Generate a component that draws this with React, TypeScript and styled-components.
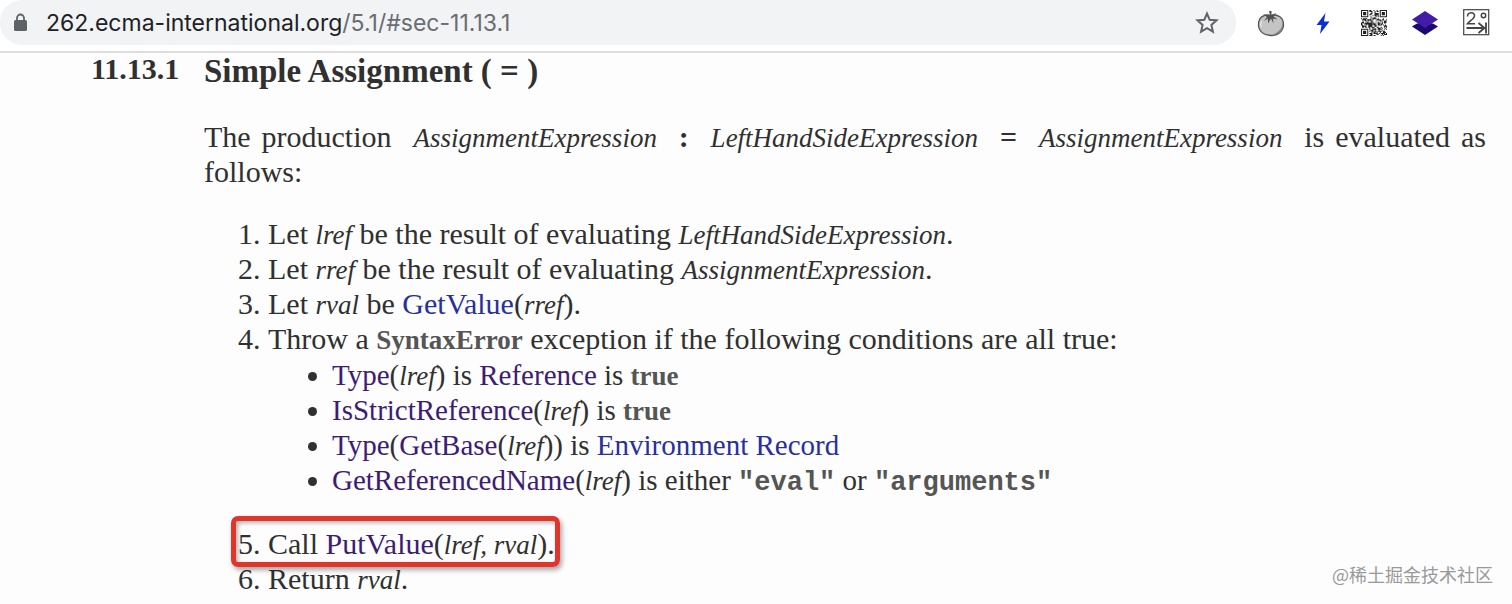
import React from "react";
import styled, { createGlobalStyle } from "styled-components";

const GlobalStyle = createGlobalStyle`
  *, *::before { box-sizing: border-box; }
  body {
    margin: 0;
    background: #fdfdfd;
    color: #303030;
    overflow: hidden;
  }
`;

const Page = styled.div`
  position: relative;
  min-height: 100vh;
`;

const Toolbar = styled.header`
  display: flex;
  align-items: flex-start;
  height: 53px;
  padding-right: 22px;
  background: #fff;
  border-bottom: 2px solid #dedede;
`;

const AddressBar = styled.div`
  display: flex;
  flex: 1;
  align-items: center;
  height: 45px;
  padding: 0 16px 0 12px;
  border-radius: 22px;
  background: #f1f3f4;
`;

const Address = styled.a`
  flex: 1;
  margin-left: 16px;
  color: #202124;
  font: 23px/28px Inter, "Liberation Sans", sans-serif;
  text-decoration: none;
`;

const AddressPath = styled.span`
  color: #6a6d71;
`;

const IconButton = styled.button`
  display: flex;
  padding: 0;
  border: 0;
  background: none;
`;

const Extensions = styled.nav`
  display: flex;
  align-items: center;
  gap: 24px;
  height: 45px;
  margin-left: 21px;
`;

const Article = styled.main`
  padding: 0 26px 0 91px;
  font-family: "Palatino", "Liberation Serif", serif;
  font-size: 30px;
  line-height: 35px;
`;

const Heading = styled.h1`
  display: flex;
  margin: 0;
  padding-top: 1px;
  font-size: 33px;
  line-height: 35px;
`;

const SectionNumber = styled.span`
  width: 113px;
  font-size: 30px;
  line-height: 30px;
`;

const Body = styled.div`
  padding-left: 113px;
`;

const Production = styled.p`
  margin: 30px 0 27px;
  text-align: justify;
`;

const Term = styled.em`
  font-size: 27px;
  line-height: 1;
`;

const Steps = styled.ol`
  margin: 0;
  padding-left: 64px;
`;

const Conditions = styled.ul`
  margin: 2px 0 28px;
  padding-left: 64px;
  font-size: 29px;
  list-style: disc;
`;

const Ref = styled.a<{ $fresh?: boolean }>`
  color: ${(p) => (p.$fresh ? "#2a2f9e" : "#3c1c74")};
  text-decoration: none;
`;

const Value = styled.b`
  color: #555;
  font-size: 27px;
  line-height: 1;
`;

const Code = styled.code`
  color: #555;
  font: bold 27px/1 "Liberation Mono", monospace;
`;

const MarkedStep = styled.li`
  position: relative;

  &::before {
    content: "";
    position: absolute;
    top: -10px;
    left: -37px;
    width: 329px;
    height: 51px;
    border: 5px solid #e0352b;
    border-radius: 7px;
    box-shadow: 2px 3px 5px rgba(0, 0, 0, 0.35), inset 2px 2px 4px rgba(0, 0, 0, 0.3);
  }
`;

const Watermark = styled.div`
  position: absolute;
  right: 19px;
  bottom: 18px;
  color: #999;
  font: 18px/24px "Noto Sans CJK SC", sans-serif;
`;

const LockIcon = () => (
  <svg width="18" height="20" viewBox="0 0 18 20" aria-hidden="true">
    <rect x="2" y="7" width="13" height="11" rx="1.5" fill="#5f6368" />
    <path d="M5 8V5a3.5 3.5 0 0 1 7 0v3" fill="none" stroke="#5f6368" strokeWidth="1.8" />
  </svg>
);

const StarIcon = () => (
  <svg width="26" height="26" viewBox="0 0 26 26" aria-hidden="true">
    <path
      d="M13 3.6l2.7 6.2 6.8.6-5.1 4.5 1.5 6.7-5.9-3.5-5.9 3.5 1.5-6.7-5.1-4.5 6.8-.6z"
      fill="none"
      stroke="#5f6368"
      strokeWidth="2"
    />
  </svg>
);

const TomatoIcon = () => (
  <svg width="28" height="28" viewBox="0 0 28 28" aria-hidden="true">
    <path
      d="M14 6.500C7 4.500 1.500 8.500 1.500 15.500S7 26.500 14 26.500 26.500 22 26.500 15.500 21 4.500 14 6.500z"
      fill="#c4c4c4"
      stroke="#555"
      strokeWidth="1.300"
    />
    <path d="M24.500 10c2.500 7-1 13-9 15.500 8 0 11-5 10.500-10z" fill="#808080" />
    <path d="M4.500 12c-1 2-1 4 0 6" stroke="#e4e4e4" strokeWidth="1.500" fill="none" />
    <path
      d="M13 6L12 2l2.500 0v4l5-2-3 3.500 4 3-4.500-1 .5 5-2.500-5-3 5v-5L7 12l3-4-4-2.500z"
      fill="#505050"
    />
  </svg>
);

const BoltIcon = () => (
  <svg width="28" height="28" viewBox="0 0 28 28" aria-hidden="true">
    <path d="M16.500 4L7.500 16h5l-1.500 9L20.500 12.500h-5.500z" fill="#0b2fd0" />
  </svg>
);

const SIZE = 25;

const inFinder = (x: number, y: number) =>
  (x < 8 && y < 8) || (x > 16 && y < 8) || (x < 8 && y > 16);

const ring = (x: number, y: number) =>
  `M${x} ${y}h7v7h-7zM${x + 1} ${y + 1}v5h5v-5zM${x + 2} ${y + 2}h3v3h-3z`;

const modules = Array.from({ length: SIZE * SIZE }, (_, i) => [i % SIZE, Math.floor(i / SIZE)])
  .filter(([x, y]) => {
    const hash = Math.sin(x * 12.9898 + y * 78.233) * 43758.5453;
    return !inFinder(x, y) && hash - Math.floor(hash) < 0.55;
  })
  .map(([x, y]) => `M${x} ${y}h1v1h-1z`)
  .join("");

const QrIcon = () => (
  <svg width="26" height="26" viewBox="0 0 25 25" aria-hidden="true">
    <path d={ring(0, 0) + ring(18, 0) + ring(0, 18) + modules} fill="#222" />
  </svg>
);

const LayersIcon = () => (
  <svg width="28" height="28" viewBox="0 0 28 28" aria-hidden="true">
    <path d="M1 17.500l5-3h16l5 3-13 8.500z" fill="#1b0872" />
    <path d="M14 2l13 8.500L14 19 1 10.500z" fill="#421ca8" />
  </svg>
);

const TabIcon = () => (
  <svg width="27" height="27" viewBox="0 0 27 27" fill="none" stroke="#444" aria-hidden="true">
    <rect x=".7" y=".7" width="25" height="25" strokeWidth="1.200" />
    <path d="M4.500 7.500c0-5 7-5 7-.8 0 3-4 4.500-7 8h7.500" strokeWidth="1.500" />
    <circle cx="20.500" cy="6.500" r="2.200" strokeWidth="1.500" />
    <path d="M3.500 19h18M15.500 14l6 5-6 5M23 13.500v11" strokeWidth="1.800" />
  </svg>
);

export default function App() {
  return (
    <Page>
      <GlobalStyle />
      <Toolbar>
        <AddressBar>
          <LockIcon />
          <Address href="#sec-11.13.1">
            262.ecma-international.org<AddressPath>/5.1/#sec-11.13.1</AddressPath>
          </Address>
          <IconButton aria-label="Bookmark"><StarIcon /></IconButton>
        </AddressBar>
        <Extensions aria-label="Extensions">
          <IconButton aria-label="Tomato timer"><TomatoIcon /></IconButton>
          <IconButton aria-label="Quick actions"><BoltIcon /></IconButton>
          <IconButton aria-label="QR code"><QrIcon /></IconButton>
          <IconButton aria-label="Layers"><LayersIcon /></IconButton>
          <IconButton aria-label="Tab tools"><TabIcon /></IconButton>
        </Extensions>
      </Toolbar>
      <Article>
        <Heading id="sec-11.13.1">
          <SectionNumber>11.13.1</SectionNumber>
          Simple Assignment ( = )
        </Heading>
        <Body>
          <Production>
            The production &nbsp;<Term>AssignmentExpression</Term>&nbsp; <b>:</b> &nbsp;
            <Term>LeftHandSideExpression</Term>&nbsp; <b>=</b> &nbsp;
            <Term>AssignmentExpression</Term>&nbsp; is evaluated as follows:
          </Production>
          <Steps>
            <li>Let <Term>lref</Term> be the result of evaluating <Term>LeftHandSideExpression</Term>.</li>
            <li>Let <Term>rref</Term> be the result of evaluating <Term>AssignmentExpression</Term>.</li>
            <li>Let <Term>rval</Term> be <Ref $fresh href="#sec-8.7.1">GetValue</Ref>(<Term>rref</Term>).</li>
            <li>
              Throw a <Value>SyntaxError</Value> exception if the following conditions are all true:
              <Conditions>
                <li>
                  <Ref href="#sec-8">Type</Ref>(<Term>lref</Term>) is <Ref href="#sec-8.7">Reference</Ref> is{" "}
                  <Value>true</Value>
                </li>
                <li><Ref href="#sec-8.7">IsStrictReference</Ref>(<Term>lref</Term>) is <Value>true</Value></li>
                <li>
                  <Ref href="#sec-8">Type</Ref>(<Ref href="#sec-8.7">GetBase</Ref>(<Term>lref</Term>)) is{" "}
                  <Ref $fresh href="#sec-10.2.1">Environment Record</Ref>
                </li>
                <li>
                  <Ref href="#sec-8.7">GetReferencedName</Ref>(<Term>lref</Term>) is either{" "}
                  <Code>"eval"</Code> or <Code>"arguments"</Code>
                </li>
              </Conditions>
            </li>
            <MarkedStep>
              Call <Ref href="#sec-8.7.2">PutValue</Ref>(<Term>lref, rval</Term>).
            </MarkedStep>
            <li>Return <Term>rval</Term>.</li>
          </Steps>
        </Body>
      </Article>
      <Watermark>@稀土掘金技术社区</Watermark>
    </Page>
  );
}
